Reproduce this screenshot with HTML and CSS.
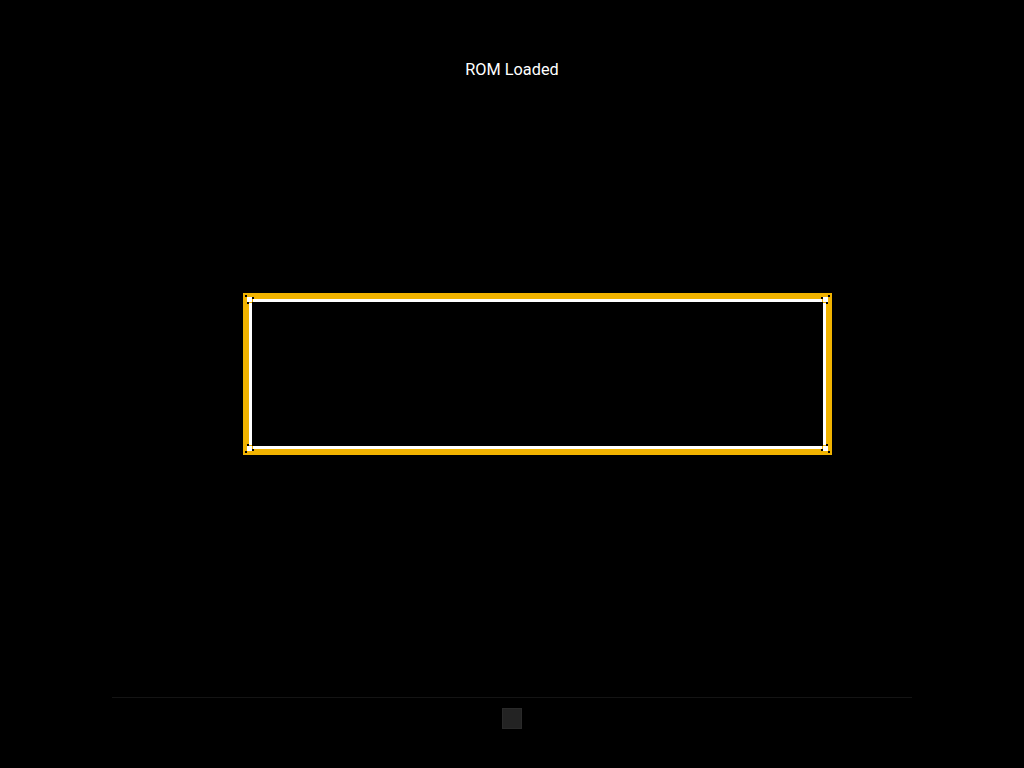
FILE: index.html
```html
<!DOCTYPE html>
<html>
<head>
<meta charset="utf-8">
<title>ROM Loaded</title>
<link rel="stylesheet" href="styles.css">
</head>
<body>
<div class="app">
  <header class="status">ROM Loaded</header>
  <main class="screen">
    <div class="frame">
      <div class="frame-inner"></div>
      <svg class="corner tl" width="16" height="16" viewBox="0 0 16 16"><rect x="0" y="0" width="10" height="10" fill="#f1b300"/><rect x="2" y="2" width="2" height="2" fill="#000"/><rect x="4" y="4" width="5" height="5" fill="#fff"/><rect x="9" y="4" width="2" height="2" fill="#000"/><rect x="4" y="9" width="2" height="2" fill="#000"/><rect x="9" y="9" width="3" height="3" fill="#000"/></svg>
      <svg class="corner tr" width="16" height="16" viewBox="0 0 16 16"><rect x="0" y="0" width="10" height="10" fill="#f1b300"/><rect x="2" y="2" width="2" height="2" fill="#000"/><rect x="4" y="4" width="5" height="5" fill="#fff"/><rect x="9" y="4" width="2" height="2" fill="#000"/><rect x="4" y="9" width="2" height="2" fill="#000"/><rect x="9" y="9" width="3" height="3" fill="#000"/></svg>
      <svg class="corner bl" width="16" height="16" viewBox="0 0 16 16"><rect x="0" y="0" width="10" height="10" fill="#f1b300"/><rect x="2" y="2" width="2" height="2" fill="#000"/><rect x="4" y="4" width="5" height="5" fill="#fff"/><rect x="9" y="4" width="2" height="2" fill="#000"/><rect x="4" y="9" width="2" height="2" fill="#000"/><rect x="9" y="9" width="3" height="3" fill="#000"/></svg>
      <svg class="corner br" width="16" height="16" viewBox="0 0 16 16"><rect x="0" y="0" width="10" height="10" fill="#f1b300"/><rect x="2" y="2" width="2" height="2" fill="#000"/><rect x="4" y="4" width="5" height="5" fill="#fff"/><rect x="9" y="4" width="2" height="2" fill="#000"/><rect x="4" y="9" width="2" height="2" fill="#000"/><rect x="9" y="9" width="3" height="3" fill="#000"/></svg>
    </div>
  </main>
  <footer class="toolbar">
    <button class="stop-btn" aria-label="Stop"></button>
  </footer>
</div>
</body>
</html>
```
FILE: styles.css
```css
html, body {
  margin: 0;
  padding: 0;
  background: #000;
  height: 100%;
}
.app {
  width: 1024px;
  height: 768px;
  display: flex;
  flex-direction: column;
  font-family: Roboto, "Liberation Sans", sans-serif;
}
.status {
  margin-top: 60px;
  height: 19px;
  line-height: 19px;
  font-size: 16.3px;
  color: #fff;
  text-align: center;
}
.screen {
  flex: 1;
  padding-top: 214px;
  padding-left: 243px;
}
.frame {
  position: relative;
  width: 589px;
  height: 162px;
  box-sizing: border-box;
  border: 6px solid #f1b300;
  background: #000;
}
.frame-inner {
  height: 100%;
  box-sizing: border-box;
  border: 3px solid #fff;
}
.corner {
  position: absolute;
  display: block;
}
.corner.tl { left: -6px; top: -6px; }
.corner.tr { right: -6px; top: -6px; transform: scaleX(-1); }
.corner.bl { left: -6px; bottom: -6px; transform: scaleY(-1); }
.corner.br { right: -6px; bottom: -6px; transform: scale(-1, -1); }
.toolbar {
  width: 800px;
  margin: 0 auto;
  height: 71px;
  box-sizing: border-box;
  border-top: 1px solid #141414;
  display: flex;
  justify-content: center;
  padding-top: 10px;
}
.stop-btn {
  width: 20px;
  height: 21px;
  padding: 0;
  margin: 0;
  border: 1px solid #2a2a2a;
  background: #232323;
  cursor: pointer;
}
```
